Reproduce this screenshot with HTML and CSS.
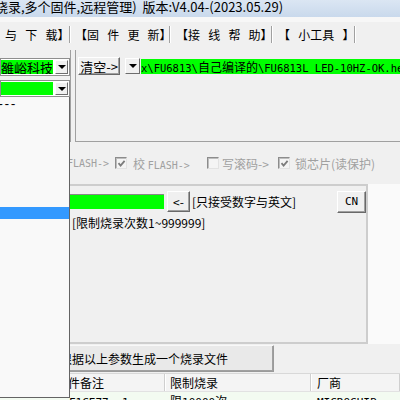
FILE: index.html
```html
<!DOCTYPE html>
<html lang="zh-CN">
<head>
  <meta charset="UTF-8">
  <title>烧录工具 V4.04</title>
  <link rel="stylesheet" href="styles.css">
</head>
<body>
  <div class="window">
    <div class="titlebar"><span class="title">烧录,多个固件,远程管理)&nbsp;&nbsp;版本:V4.04-(2023.05.29)</span></div>

    <div class="tabs">
      <div class="tab tab-1">与 下 载】</div>
      <div class="tab tab-2">【固 件 更 新】</div>
      <div class="tab tab-3">【接 线 帮 助】</div>
      <div class="tab tab-4">【 小工具 】</div>
    </div>

    <div class="top">
      <div class="chip-box">
        <div class="combo">
          <div class="combo-value">雒峪科技</div>
          <div class="drop"></div>
        </div>
        <div class="combo combo-2">
          <div class="combo-value"></div>
          <div class="drop"></div>
        </div>
      </div>
      <div class="file-box">
        <div class="file-row">
          <div class="btn btn-clear">清空-&gt;</div>
          <div class="drop drop-file"></div>
          <div class="path"><span class="mono">x\FU6813\</span>自己编译的<span class="mono">\FU6813L_LED-10HZ-OK.hex</span></div>
        </div>
      </div>
    </div>

    <div class="options">
      <span class="opt-text mono">FLASH-&gt;</span>
      <span class="check"><svg viewBox="0 0 9 9"><path d="M1.5 4.2 L3.6 6.6 L7.6 1.8" /></svg></span>
      <span class="opt-text">校 <span class="mono">FLASH-&gt;</span></span>
      <span class="check"></span>
      <span class="opt-text">写滚码-&gt;</span>
      <span class="check"><svg viewBox="0 0 9 9"><path d="M1.5 4.2 L3.6 6.6 L7.6 1.8" /></svg></span>
      <span class="opt-text">锁芯片(读保护)</span>
    </div>

    <div class="lower">
      <div class="panel">
        <div class="key-row">
          <div class="key-input"></div>
          <div class="btn btn-back">&lt;-</div>
          <span class="hint">[只接受数字与英文]</span>
          <div class="btn btn-cn">CN</div>
        </div>
        <div class="limit">[限制烧录次数1~999999]</div>
      </div>
      <div class="side"></div>
    </div>

    <div class="gen-row">
      <div class="btn btn-gen">根据以上参数生成一个烧录文件</div>
    </div>

    <div class="grid">
      <div class="grid-head">
        <div class="cell c1">固件备注</div>
        <div class="cell c2">限制烧录</div>
        <div class="cell c3">厂商</div>
      </div>
      <div class="grid-row">
        <div class="cell c1"><span class="mono">F1CE77&nbsp;&nbsp;1</span></div>
        <div class="cell c2">限<span class="mono">10000</span>次</div>
        <div class="cell c3"><span class="mono">MICROCHIP</span></div>
      </div>
    </div>

    <!-- open drop list of the second combo, lies over the form -->
    <div class="popup">
      <div class="popup-item">---</div>
      <div class="popup-sel"></div>
    </div>
  </div>
</body>
</html>
```

FILE: styles.css
```css
* {
  box-sizing: border-box;
}

body {
  margin: 0;
  background: #f0f0f0;
  font-family: "Noto Sans CJK SC", sans-serif;
  font-size: 12px;
  color: #000;
}

.window {
  position: relative;
  width: 400px;
  height: 400px;
  overflow: hidden;
  background: #f0f0f0;
}

.mono {
  font-family: "DejaVu Sans Mono", "Noto Sans CJK SC", monospace;
  font-size: 10px;
}

/* title + tabs */
.titlebar {
  height: 17px;
  background: linear-gradient(#dbe6f3, #c9d9ec);
  font-size: 13px;
  line-height: 14px;
  white-space: nowrap;
}

.title {
  display: inline-block;
  margin-left: -5px;
}

.tabs {
  display: flex;
  align-items: center;
  height: 33px;
  padding-top: 2px;
  background: linear-gradient(#f7f7f7 0 5px, #f0f0f0 5px);
}

.tab {
  height: 17px;
  line-height: 17px;
  border-right: 1px solid #a0a0a0;
  box-shadow: 1px 0 #fff;
  word-spacing: 5.5px;
  white-space: nowrap;
}

.tab-1 { width: 70px; padding-left: 5px; }
.tab-2 { width: 100px; padding-left: 5px; }
.tab-3 { width: 102px; padding-left: 6px; }
.tab-4 { width: 83px; padding-left: 6px; }

/* chip / file boxes */
.top {
  display: flex;
  height: 92px;
}

.chip-box {
  width: 78px;
  padding-top: 8px;
  border-right: 1px solid #a0a0a0;
  border-bottom: 1px solid #a0a0a0;
}

.file-box {
  flex: 1;
  margin-left: 4px;
  padding-top: 7px;
  border-left: 1px solid #a0a0a0;
  border-bottom: 1px solid #a0a0a0;
}

.combo {
  display: flex;
  width: 70px;
  height: 18px;
  padding: 1px 1px 1px 0;
  border: 1px solid #8e8e8e;
  background: #fff;
}

.combo-2 {
  height: 17px;
  margin-top: 4px;
}

.combo-value {
  display: flex;
  justify-content: flex-end;
  width: 52px;
  overflow: hidden;
  background: #00ff00;
  font-size: 13px;
  line-height: 15px;
  white-space: nowrap;
}

.drop {
  display: flex;
  align-items: center;
  justify-content: center;
  width: 13px;
  margin-left: auto;
  background: #f0f0f0;
  border: 1px solid;
  border-color: #fff #6d6d6d #6d6d6d #fff;
}

.drop::after {
  content: "";
  border: 4px solid transparent;
  border-top: 4px solid #000;
  border-bottom: 0;
}

.file-row {
  display: flex;
  align-items: center;
  height: 18px;
}

.btn {
  display: flex;
  align-items: center;
  justify-content: center;
  flex: none;
  background: #f0f0f0;
  border: 1px solid;
  border-color: #fff #696969 #696969 #fff;
  box-shadow: inset -1px -1px #a0a0a0;
  white-space: nowrap;
}

.btn-clear {
  width: 42px;
  height: 18px;
  margin-left: 2px;
  font-size: 13px;
}

.drop-file {
  flex: none;
  width: 15px;
  height: 16px;
  margin-left: 5px;
}

.path {
  flex: 1;
  height: 15px;
  margin-left: 1px;
  overflow: hidden;
  background: #00ff00;
  line-height: 15px;
  white-space: nowrap;
}

.path .mono {
  font-size: 10.5px;
}

/* option checkboxes (disabled) */
.options {
  display: grid;
  grid-template-columns: 48px 18px 74px 15px 56px 17px auto;
  align-items: center;
  height: 42px;
  padding-left: 67px;
  color: #a0a0a0;
  white-space: nowrap;
}

.check {
  display: flex;
  align-items: center;
  justify-content: center;
  width: 12px;
  height: 12px;
  background: #f4f4f4;
  border: 1px solid;
  border-color: #8c8c8c #e2e2e2 #e2e2e2 #8c8c8c;
  box-shadow: inset 1px 1px #bdbdbd;
}

.check svg {
  width: 9px;
  height: 9px;
  fill: none;
  stroke: #7c7c7c;
  stroke-width: 1.8;
}

/* key panel */
.lower {
  display: flex;
  height: 160px;
}

.panel {
  width: 368px;
  padding-top: 4px;
  border-top: 2px solid #cdcdcd;
  border-right: 2px solid #cdcdcd;
  border-bottom: 2px solid #cdcdcd;
}

.side {
  flex: 1;
  background: #fafafa;
}

.key-row {
  display: flex;
  align-items: center;
  height: 23px;
}

.key-input {
  width: 164px;
  height: 15px;
  background: #00ff00;
  border-top: 1px solid #888;
}

.btn-back {
  width: 23px;
  height: 21px;
  margin-left: 3px;
}

.hint {
  margin-left: 2px;
  white-space: nowrap;
}

.btn-cn {
  width: 29px;
  height: 22px;
  margin-left: auto;
  font-family: "DejaVu Sans Mono", monospace;
  font-size: 11px;
}

.limit {
  margin-top: 2px;
  padding-left: 72px;
  line-height: 16px;
}

/* generate button */
.gen-row {
  height: 29px;
  padding-top: 1px;
}

.btn-gen {
  justify-content: flex-start;
  width: 274px;
  height: 27px;
  padding-left: 59px;
  background: #e9e9e9;
  border-color: #f8f8f8 #9a9a9a #9a9a9a #f8f8f8;
}

/* firmware list */
.grid-head {
  display: flex;
  height: 19px;
  background: #f4f4f4;
  border-top: 1px solid #d8d8d8;
  border-bottom: 1px solid #e2e2e2;
}

.cell {
  overflow: hidden;
  white-space: nowrap;
}

.grid-head .cell {
  line-height: 17px;
  border-right: 1px solid #cfcfcf;
  box-shadow: 1px 0 #fff;
}

.c1 { width: 165px; padding-left: 56px; }
.c2 { width: 146px; padding-left: 5px; }
.c3 { flex: 1; padding-left: 6px; }

.grid-row {
  display: flex;
  height: 20px;
  padding-top: 1px;
  background: #f3fbf1;
  line-height: 16px;
}

.grid-row .c1 {
  padding-left: 69px;
}

.grid-row .mono {
  font-size: 11px;
}

/* dropped-down list */
.popup {
  position: absolute;
  left: 0;
  top: 97px;
  width: 70px;
  height: 301px;
  background: #f9f9f9;
  border-right: 1px solid #646464;
  border-bottom: 1px solid #646464;
}

.popup-item {
  height: 13px;
  margin-top: 2px;
  line-height: 13px;
  text-indent: -3px;
  font-family: "Liberation Mono", monospace;
  font-size: 12px;
  letter-spacing: -1px;
}

.popup-sel {
  height: 12px;
  margin-top: 95px;
  background: #3399ff;
}
```
